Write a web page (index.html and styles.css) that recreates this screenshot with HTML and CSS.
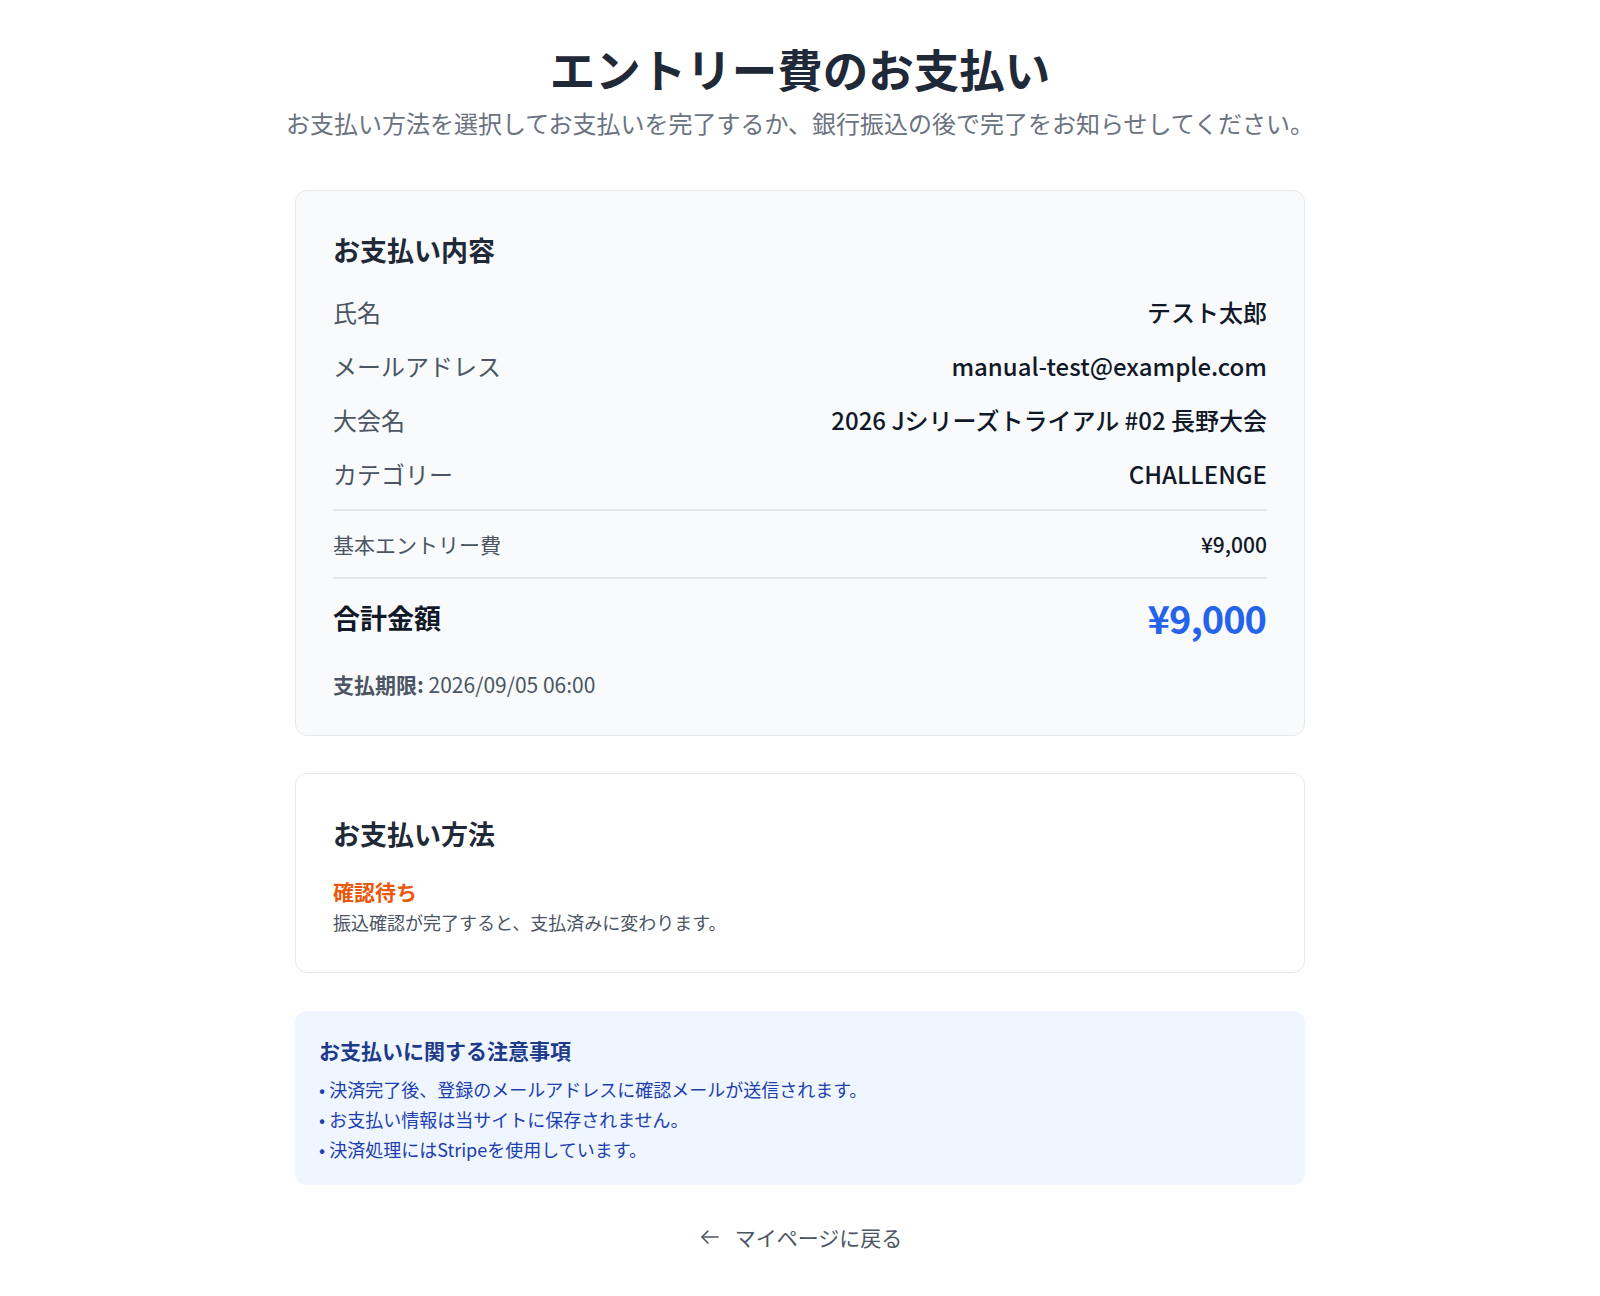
FILE: index.html
```html
<!DOCTYPE html>
<html lang="ja">
<head>
<meta charset="utf-8">
<title>エントリー費のお支払い</title>
<link rel="stylesheet" href="styles.css">
</head>
<body>
<main class="page">
  <header class="page-header">
    <h1 class="title">エントリー費のお支払い</h1>
    <p class="subtitle">お支払い方法を選択してお支払いを完了するか、銀行振込の後で完了をお知らせしてください。</p>
  </header>

  <section class="card card-summary">
    <h2 class="card-title">お支払い内容</h2>
    <dl class="details">
      <div class="detail-row"><dt>氏名</dt><dd>テスト太郎</dd></div>
      <div class="detail-row"><dt>メールアドレス</dt><dd>manual-test@example.com</dd></div>
      <div class="detail-row"><dt>大会名</dt><dd>2026 Jシリーズトライアル #02 長野大会</dd></div>
      <div class="detail-row"><dt>カテゴリー</dt><dd>CHALLENGE</dd></div>
    </dl>
    <div class="fee-row"><span>基本エントリー費</span><span class="fee-value">¥9,000</span></div>
    <div class="total-row"><span class="total-label">合計金額</span><span class="total-value">¥9,000</span></div>
    <p class="deadline"><strong>支払期限:</strong> 2026/09/05 06:00</p>
  </section>

  <section class="card card-method">
    <h2 class="card-title">お支払い方法</h2>
    <p class="status">確認待ち</p>
    <p class="status-note">振込確認が完了すると、支払済みに変わります。</p>
  </section>

  <section class="notice">
    <h3 class="notice-title">お支払いに関する注意事項</h3>
    <ul class="notice-list">
      <li>• 決済完了後、登録のメールアドレスに確認メールが送信されます。</li>
      <li>• お支払い情報は当サイトに保存されません。</li>
      <li>• 決済処理にはStripeを使用しています。</li>
    </ul>
  </section>

  <nav class="back">
    <a class="back-link" href="#">
      <svg class="back-icon" viewBox="0 0 24 24" width="24" height="24" fill="none" stroke="currentColor" stroke-width="1.6" stroke-linecap="round" stroke-linejoin="round"><path d="M20 12H4"/><path d="M10 6l-6 6 6 6"/></svg>
      <span>マイページに戻る</span>
    </a>
  </nav>
</main>
</body>
</html>
```

FILE: styles.css
```css
* { box-sizing: border-box; }

html, body {
  margin: 0;
  padding: 0;
  background: #ffffff;
}

body {
  font-family: "Noto Sans CJK JP", "Noto Sans", sans-serif;
  color: #1f2937;
}

.page {
  width: 1010px;
  margin: 0 auto;
  padding-top: 40px;
  padding-bottom: 40px;
}

.page-header {
  text-align: center;
  margin-bottom: 50px;
}

.title {
  margin: 0;
  font-size: 45.5px;
  line-height: 56px;
  font-weight: 700;
  color: #1f2937;
}

.subtitle {
  margin: 10px -40px 0;
  font-size: 24px;
  line-height: 34px;
  color: #6b7280;
  white-space: nowrap;
}

.card {
  border: 1px solid #e5e7eb;
  border-radius: 12px;
  padding: 36px 37px;
}

.card-summary {
  background: #f8fafc;
}

.card-method {
  background: #ffffff;
  margin-top: 37px;
  padding-top: 37px;
  padding-bottom: 37px;
}

.card-title {
  margin: 0;
  font-size: 27px;
  line-height: 46px;
  font-weight: 700;
  color: #1f2937;
}

.details {
  margin: 21px 0 0;
  display: flex;
  flex-direction: column;
  gap: 18px;
}

.detail-row {
  display: flex;
  justify-content: space-between;
  align-items: center;
  font-size: 24px;
  line-height: 36px;
}

.detail-row dt {
  color: #4b5563;
}

.detail-row dd {
  margin: 0;
  color: #111827;
  font-weight: 500;
}

.fee-row {
  margin-top: 17px;
  border-top: 2px solid #e5e7eb;
  border-bottom: 2px solid #e5e7eb;
  padding: 16px 0;
  display: flex;
  justify-content: space-between;
  align-items: center;
  font-size: 21px;
  line-height: 34px;
  color: #4b5563;
}

.fee-value {
  color: #111827;
  font-weight: 500;
}

.total-row {
  display: flex;
  justify-content: space-between;
  align-items: center;
  padding-top: 14px;
}

.total-label {
  font-size: 27px;
  line-height: 40px;
  font-weight: 700;
  color: #111827;
}

.total-value {
  font-size: 38px;
  line-height: 50px;
  font-weight: 700;
  letter-spacing: -1px;
  margin-right: 1px;
  color: #2563eb;
}

.deadline {
  margin: 26px 0 0;
  font-size: 21px;
  line-height: 30px;
  color: #4b5563;
}

.deadline strong {
  font-weight: 700;
}

.status {
  margin: 19px 0 0;
  font-size: 21px;
  line-height: 30px;
  font-weight: 700;
  color: #ea580c;
}

.status-note {
  margin: 3px 0 0;
  font-size: 18px;
  line-height: 26px;
  color: #4b5563;
}

.notice {
  margin-top: 38px;
  background: #eff6ff;
  border-radius: 12px;
  padding: 24px 24px 21px;
}

.notice-title {
  margin: 0;
  font-size: 21px;
  line-height: 30px;
  font-weight: 700;
  color: #1e3a8a;
}

.notice-list {
  list-style: none;
  margin: 9px 0 0;
  padding: 0;
  font-size: 18px;
  line-height: 30px;
  color: #1e40af;
}

.back {
  margin-top: 37px;
  display: flex;
  justify-content: center;
}

.back-link {
  display: inline-flex;
  align-items: center;
  gap: 13px;
  font-size: 21px;
  line-height: 30px;
  color: #4b5563;
  text-decoration: none;
}

.back-icon {
  display: block;
}
```
